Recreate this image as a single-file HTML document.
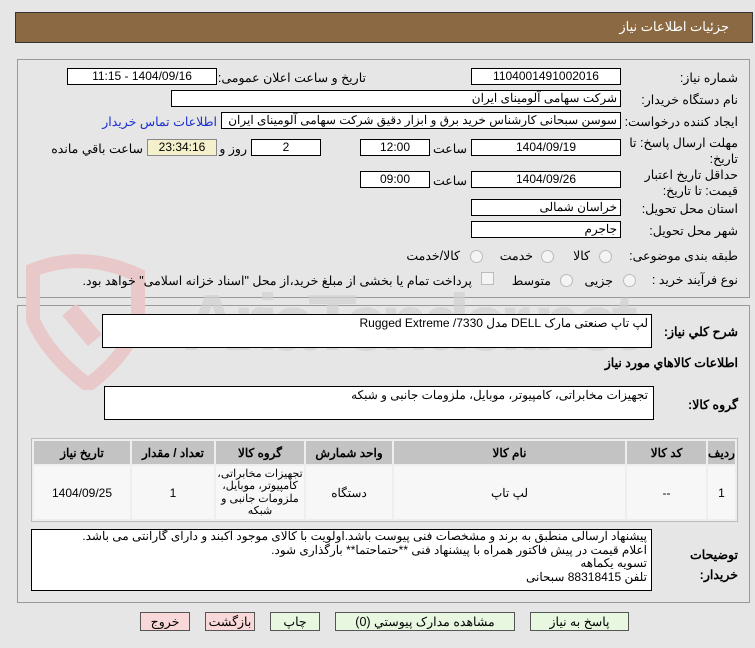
<!DOCTYPE html>
<html><head><meta charset="utf-8"><style>
body{margin:0;width:755px;height:648px;background:#e6e6e6;font-family:"Liberation Sans","Noto Sans CJK SC",sans-serif;font-size:12px;color:#000;position:relative;overflow:hidden}
.a{position:absolute;white-space:nowrap}
.in{position:absolute;background:#fff;border:1px solid #000;box-sizing:border-box;height:17px;line-height:15px;font-size:12px;padding:0 3px;direction:rtl;white-space:nowrap;overflow:hidden}
.c{text-align:center}
.l{position:absolute;direction:rtl;text-align:right;font-size:12.5px;white-space:nowrap}
.btn{position:absolute;top:612px;height:19px;line-height:18px;border:1px solid #555;box-sizing:border-box;text-align:center;font-size:12.5px;background:#e8f8e0}
.pk{background:#f8d8d8}
.rad{position:absolute;width:11px;height:11px;border-radius:50%;border:1px solid #bbb;background:#f4f4f4}
table{border-collapse:separate;border-spacing:2px;direction:rtl;table-layout:fixed}
td{text-align:center;font-size:12px;overflow:hidden;padding:0}
</style></head><body>
<div class="a" style="left:15px;top:12px;width:738px;height:31px;background:#8b6a43;border:1px solid #333;box-sizing:border-box"></div>
<div class="a" style="right:26px;top:19px;color:#fff;font-size:13px">جزئیات اطلاعات نیاز</div>

<div class="a" style="left:17px;top:59px;width:733px;height:239px;border:1px solid #999;box-sizing:border-box"></div>
<div class="a" style="left:17px;top:305px;width:733px;height:298px;border:1px solid #999;box-sizing:border-box"></div>

<svg class="a" style="left:18px;top:250px" width="640" height="140">
<path d="M15 20 Q65 0 120 25 L120 70 Q110 105 70 135 Q30 105 15 70 Z" fill="none" stroke="#e8c8c8" stroke-width="14"/>
<rect x="55" y="55" width="18" height="40" fill="#e8c8c8" transform="rotate(-40 64 75)"/>
<text x="165" y="100" font-family="Liberation Sans" font-weight="bold" font-size="80" fill="#d2d2d2" opacity="0.7" textLength="455">AriaTender.net</text>
</svg>

<div class="l" style="right:17px;top:70px">شماره نیاز:</div>
<div class="in c" style="left:471px;top:68px;width:150px">1104001491002016</div>
<div class="l" style="right:389px;top:70px">تاریخ و ساعت اعلان عمومی:</div>
<div class="in c" style="left:67px;top:68px;width:150px">1404/09/16 - 11:15</div>

<div class="l" style="right:17px;top:92px">نام دستگاه خریدار:</div>
<div class="in" style="left:171px;top:90px;width:450px">شرکت سهامی آلومینای ایران</div>

<div class="l" style="right:17px;top:114px">ایجاد کننده درخواست:</div>
<div class="in" style="left:221px;top:112px;width:400px">سوسن سبحانی کارشناس خرید برق و ابزار دقیق شرکت سهامی آلومینای ایران</div>
<div class="l" style="right:538px;top:114px;color:#1a2fd0">اطلاعات تماس خریدار</div>

<div class="l" style="right:17px;top:135px;line-height:16px">مهلت ارسال پاسخ: تا<br>تاریخ:</div>
<div class="in c" style="left:471px;top:139px;width:150px">1404/09/19</div>
<div class="l" style="right:288px;top:141px">ساعت</div>
<div class="in c" style="left:360px;top:139px;width:70px">12:00</div>
<div class="in c" style="left:251px;top:139px;width:70px">2</div>
<div class="l" style="right:508px;top:141px">روز و</div>
<div class="in c" style="left:147px;top:139px;width:70px;background:#f5f0cc;border-color:#888">23:34:16</div>
<div class="l" style="right:612px;top:141px">ساعت باقي مانده</div>

<div class="l" style="right:17px;top:167px;line-height:16px">حداقل تاریخ اعتبار<br>قیمت: تا تاریخ:</div>
<div class="in c" style="left:471px;top:171px;width:150px">1404/09/26</div>
<div class="l" style="right:288px;top:173px">ساعت</div>
<div class="in c" style="left:360px;top:171px;width:70px">09:00</div>

<div class="l" style="right:17px;top:201px">استان محل تحویل:</div>
<div class="in" style="left:471px;top:199px;width:150px">خراسان شمالی</div>
<div class="l" style="right:17px;top:223px">شهر محل تحویل:</div>
<div class="in" style="left:471px;top:221px;width:150px">جاجرم</div>

<div class="l" style="right:17px;top:248px">طبقه بندی موضوعی:</div>
<div class="rad" style="left:599px;top:250px"></div><div class="l" style="right:165px;top:248px">کالا</div>
<div class="rad" style="left:541px;top:250px"></div><div class="l" style="right:222px;top:248px">خدمت</div>
<div class="rad" style="left:470px;top:250px"></div><div class="l" style="right:295px;top:248px">کالا/خدمت</div>

<div class="l" style="right:17px;top:272px">نوع فرآیند خرید :</div>
<div class="rad" style="left:623px;top:274px"></div><div class="l" style="right:142px;top:273px">جزیی</div>
<div class="rad" style="left:560px;top:274px"></div><div class="l" style="right:204px;top:273px">متوسط</div>
<div class="a" style="left:481px;top:272px;width:11px;height:11px;border:1px solid #bbb;background:#f4f4f4"></div>
<div class="l" style="right:283px;top:273px">پرداخت تمام یا بخشی از مبلغ خرید،از محل "اسناد خزانه اسلامی" خواهد بود.</div>

<div class="l" style="right:17px;top:324px;font-weight:bold">شرح کلي نياز:</div>
<div class="in" style="left:102px;top:314px;width:550px;height:34px;line-height:16px">لپ تاپ صنعتی مارک DELL مدل Rugged Extreme /7330</div>
<div class="l" style="right:17px;top:355px;font-weight:bold">اطلاعات کالاهاي مورد نياز</div>
<div class="l" style="right:17px;top:397px;font-weight:bold">گروه کالا:</div>
<div class="in" style="left:104px;top:386px;width:550px;height:34px;line-height:16px;padding-right:5px">تجهیزات مخابراتی، کامپیوتر، موبایل، ملزومات جانبی و شبکه</div>

<div class="a" style="left:31px;top:438px;width:707px;height:84px;border:1px solid #bbb;box-sizing:border-box;background:#eee;overflow:hidden">
<table style="width:705px;margin:0">
<colgroup><col style="width:27px"><col style="width:79px"><col style="width:231px"><col style="width:86px"><col style="width:88px"><col style="width:82px"><col></colgroup>
<tr style="background:#c3c3c3;height:23px;font-weight:bold"><td>رديف</td><td>کد کالا</td><td>نام کالا</td><td>واحد شمارش</td><td>گروه کالا</td><td>تعداد / مقدار</td><td>تاریخ نیاز</td></tr>
<tr style="background:#f7f7f7;height:53px"><td>1</td><td>--</td><td>لپ تاپ</td><td>دستگاه</td><td style="line-height:12.5px;font-size:11px;white-space:normal;letter-spacing:-0.3px">تجهیزات مخابراتی، کامپیوتر، موبایل، ملزومات جانبی و شبکه</td><td>1</td><td>1404/09/25</td></tr>
</table></div>

<div class="l" style="right:17px;top:545px;font-weight:bold;line-height:20px">توضیحات<br>خریدار:</div>
<div class="in" style="left:31px;top:529px;width:621px;height:62px;line-height:13.5px;white-space:normal;padding-right:4px">پیشنهاد ارسالی منطبق به برند و مشخصات فنی پیوست باشد.اولویت با کالای موجود آکبند و دارای گارانتی می باشد.<br>اعلام قیمت در پیش فاکتور همراه با پیشنهاد فنی **حتماحتما** بارگذاری شود.<br>تسویه یکماهه<br>تلفن 88318415 سبحانی</div>

<div class="btn" style="left:530px;width:99px">پاسخ به نياز</div>
<div class="btn" style="left:335px;width:180px">مشاهده مدارک پيوستي (0)</div>
<div class="btn" style="left:270px;width:50px">چاپ</div>
<div class="btn pk" style="left:205px;width:50px">بازگشت</div>
<div class="btn pk" style="left:140px;width:50px">خروج</div>
</body></html>
